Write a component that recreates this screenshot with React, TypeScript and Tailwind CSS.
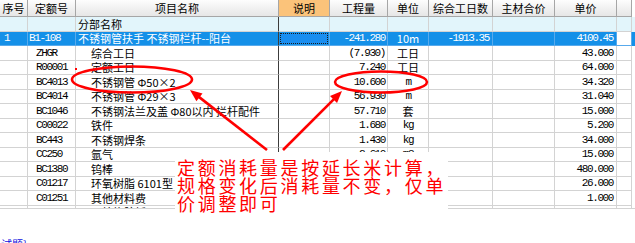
import type { ReactNode } from "react";

const GRID = "grid grid-cols-[28px_48px_203px_51px_58px_41px_64px_62px_62px_15px]";

type Row = {
  kind: "section" | "selected" | "item";
  no?: string;
  code?: string;
  name: string;
  qty?: string;
  unit?: string;
  days?: string;
  price?: string;
};

const HEAD = ["序号", "定额号", "项目名称", "说明", "工程量", "单位", "综合工日数", "主材合价", "单价", ""];

// 批注框下面被盖住的工程量/单位不写出来
const ROWS: Row[] = [
  { kind: "section", name: "分部名称" },
  {
    kind: "selected",
    no: "1",
    code: "B1-108",
    name: "不锈钢管扶手 不锈钢栏杆--阳台",
    qty: "-241.280",
    unit: "10m",
    days: "-1913.35",
    price: "4100.45",
  },
  { kind: "item", code: "ZHGR", name: "综合工日", qty: "(7.930)", unit: "工日", price: "43.000" },
  { kind: "item", code: "R00001", name: "定额工日", qty: "7.240", unit: "工日", price: "64.000" },
  { kind: "item", code: "BC4013", name: "不锈钢管 Φ50×2", qty: "10.600", unit: "m", price: "34.320" },
  { kind: "item", code: "BC4014", name: "不锈钢管 Φ29×3", qty: "56.930", unit: "m", price: "31.040" },
  { kind: "item", code: "BC1046", name: "不锈钢法兰及盖 Φ80以内 拦杆配件", qty: "57.710", unit: "套", price: "15.000" },
  { kind: "item", code: "C00022", name: "铁件", qty: "1.680", unit: "kg", price: "5.200" },
  { kind: "item", code: "BC443", name: "不锈钢焊条", qty: "1.430", unit: "kg", price: "34.000" },
  { kind: "item", code: "CC250", name: "氩气", qty: "2.610", unit: "m3", price: "15.000" },
  { kind: "item", code: "BC1380", name: "钨棒", price: "480.000" },
  { kind: "item", code: "C01217", name: "环氧树脂 6101型", price: "26.000" },
  { kind: "item", code: "C01251", name: "其他材料费", price: "1.000" },
  { kind: "item", name: "石棉橡胶板" },
];

const MONO = "font-['Liberation_Mono','Noto_Sans_CJK_SC',monospace] text-[11px] tracking-[-1.4px]";

function TableRow({ row }: { row: Row }) {
  const sel = row.kind === "selected";
  const sec = row.kind === "section";
  const item = row.kind === "item";
  const bg = sel ? "bg-[#1490e8] text-white" : sec ? "bg-[#e2f5fb] text-black" : "bg-white text-black";
  const line = sel ? "border-[#58aaec]" : "border-[#d3d3d3]";
  const cell = `h-[14.5px] border-b border-r ${line} flex items-center overflow-hidden whitespace-nowrap`;

  return (
    <div className={`${GRID} ${bg}`}>
      <div className={`${cell} pl-[4px] ${MONO}`}>{row.no}</div>
      <div className={`${cell} ${item ? "pl-[8px]" : "pl-[1px]"} ${MONO}`}>{row.code}</div>
      <div className={`${cell} !border-r-[#3c3c3c] ${item ? "pl-[15px]" : "pl-[2px]"} text-[11px]`}>{row.name}</div>
      <div className={`${cell} p-px`}>
        {sel && <div className="h-full w-full border border-dotted border-[#1b1b1b] bg-[#1a8ef0]" />}
      </div>
      <div className={`${cell} justify-end pr-[2px] ${MONO}`}>{row.qty}</div>
      <div className={`${cell} justify-center text-[11px] ${item && row.unit !== "工日" && row.unit !== "套" ? MONO : ""}`}>
        {row.unit}
      </div>
      <div className={`${cell} justify-end pr-[3px] ${MONO}`}>{row.days}</div>
      <div className={`${cell}`} />
      <div className={`${cell} justify-end pr-[3px] ${MONO}`}>{row.price}</div>
      <div className={`${cell} ${sel ? "bg-white" : ""}`} />
    </div>
  );
}

function Arrow({ x1, y1, x2, y2 }: { x1: number; y1: number; x2: number; y2: number }) {
  const dx = x2 - x1;
  const dy = y2 - y1;
  const len = Math.hypot(dx, dy);
  const ux = dx / len;
  const uy = dy / len;
  const hl = 12;
  const hw = 5;
  const bx = x2 - ux * hl;
  const by = y2 - uy * hl;
  const pts = `${x2},${y2} ${bx - uy * hw},${by + ux * hw} ${bx + uy * hw},${by - ux * hw}`;
  return (
    <g>
      <line x1={x1} y1={y1} x2={bx + ux * 2} y2={by + uy * 2} stroke="#ff0000" strokeWidth={2.6} />
      <polygon points={pts} fill="#ff0000" />
    </g>
  );
}

function Header() {
  return (
    <div className={GRID}>
      {HEAD.map((h, i) => (
        <div
          key={i}
          className={`flex h-[17px] items-center justify-center border-r border-b border-[#a6a6a6] text-[11px] text-black ${
            h === "说明" ? "bg-[#fbc37a]" : "bg-linear-to-b from-[#fdfdfd] to-[#e6e6e6]"
          }`}
        >
          {h}
        </div>
      ))}
    </div>
  );
}

function Overlay({ children }: { children: ReactNode }) {
  return <div className="pointer-events-none absolute inset-0">{children}</div>;
}

export default function App() {
  return (
    <div className="relative h-[243px] w-[635px] overflow-hidden bg-white font-['Noto_Sans_CJK_SC',sans-serif]">
      <div className="h-[209px] overflow-hidden border-b border-[#d3d3d3]">
        <Header />
        {ROWS.map((r, i) => (
          <TableRow key={i} row={r} />
        ))}
      </div>
      <div className="pt-[28px] pl-px text-[11px] leading-[14px] text-[#1010e0]">试题]</div>

      {/* 批注 */}
      <span className="absolute top-[68px] left-[75px] h-[2px] w-[2px] bg-[#ff0000]" />
      <div className="absolute top-[152px] left-[175px] h-[91px] w-[273px] bg-white pt-[6px] pl-[2px] text-[18px] leading-[18px] tracking-[2.7px] whitespace-nowrap text-[#ff0000]">
        定额消耗量是按延长米计算，
        <br />
        规格变化后消耗量不变，仅单
        <br />
        价调整即可
      </div>
      <Overlay>
        <svg width={635} height={243} className="absolute inset-0">
          <ellipse cx={132} cy={79.5} rx={60} ry={13} fill="none" stroke="#ff0000" strokeWidth={2.6} />
          <ellipse cx={381} cy={82} rx={46} ry={10.5} fill="none" stroke="#ff0000" strokeWidth={2.6} />
          <Arrow x1={267} y1={150} x2={190} y2={90} />
          <Arrow x1={283} y1={150} x2={342} y2={91} />
        </svg>
      </Overlay>
    </div>
  );
}
